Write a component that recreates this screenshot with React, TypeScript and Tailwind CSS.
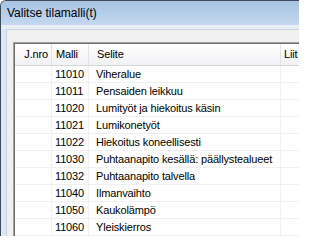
import React from "react";

const rows: [string, string][] = [
  ["11010", "Viheralue"],
  ["11011", "Pensaiden leikkuu"],
  ["11020", "Lumityöt ja hiekoitus käsin"],
  ["11021", "Lumikonetyöt"],
  ["11022", "Hiekoitus koneellisesti"],
  ["11030", "Puhtaanapito kesällä: päällystealueet"],
  ["11032", "Puhtaanapito talvella"],
  ["11040", "Ilmanvaihto"],
  ["11050", "Kaukolämpö"],
  ["11060", "Yleiskierros"],
];

export default function App() {
  return (
    <div
      className="w-[299px] h-[236px] overflow-hidden flex flex-col bg-[#dfe8f2] border-t border-l border-[#3d4a5a] rounded-tl-[6px]"
      style={{ fontFamily: '"Liberation Sans", Arial, sans-serif' }}
    >
      <div className="h-[24px] shrink-0 flex items-center pl-[6px] bg-gradient-to-b from-[#a8c3e3] to-[#c4d8ef] text-[12px] text-black">
        Valitse tilamalli(t)
      </div>
      <div className="h-[4px] shrink-0 bg-[#e9eef4]" />
      <div className="flex-1 ml-[5px] bg-[#f0f0f0] border-t border-l border-[#c9d2dd] pt-[12px] pl-[6px]">
        <div className="border-t border-l border-[#a0a0a0] h-full">
          <div className="border-t border-l border-[#6e6e6e] h-full bg-white text-[11px] tracking-[-0.15px] text-black">
            <div className="flex h-[22px] border-b border-[#d5d5d5] bg-gradient-to-b from-white to-[#f1f2f4]">
              <div className="w-[37px] shrink-0 flex items-center justify-end pr-[3px] border-r border-[#e2e3e5]">
                J.nro
              </div>
              <div className="w-[37px] shrink-0 flex items-center pl-[4px] border-r border-[#e2e3e5]">
                Malli
              </div>
              <div className="w-[192px] shrink-0 flex items-center pl-[8px] border-r border-[#e2e3e5]">
                Selite
              </div>
              <div className="shrink-0 flex items-center pl-[3px] whitespace-nowrap">
                Liit
              </div>
            </div>
            {rows.map(([m, s]) => (
              <div key={m} className="flex h-[17px] border-b border-[#f0f0f0]">
                <div className="w-[37px] shrink-0 border-r border-[#f0f0f0]" />
                <div className="w-[37px] shrink-0 flex items-center pl-[3px] border-r border-[#f0f0f0]">
                  {m}
                </div>
                <div className="w-[192px] shrink-0 flex items-center pl-[7px] border-r border-[#f0f0f0] whitespace-nowrap">
                  {s}
                </div>
                <div className="flex-1" />
              </div>
            ))}
          </div>
        </div>
      </div>
    </div>
  );
}
